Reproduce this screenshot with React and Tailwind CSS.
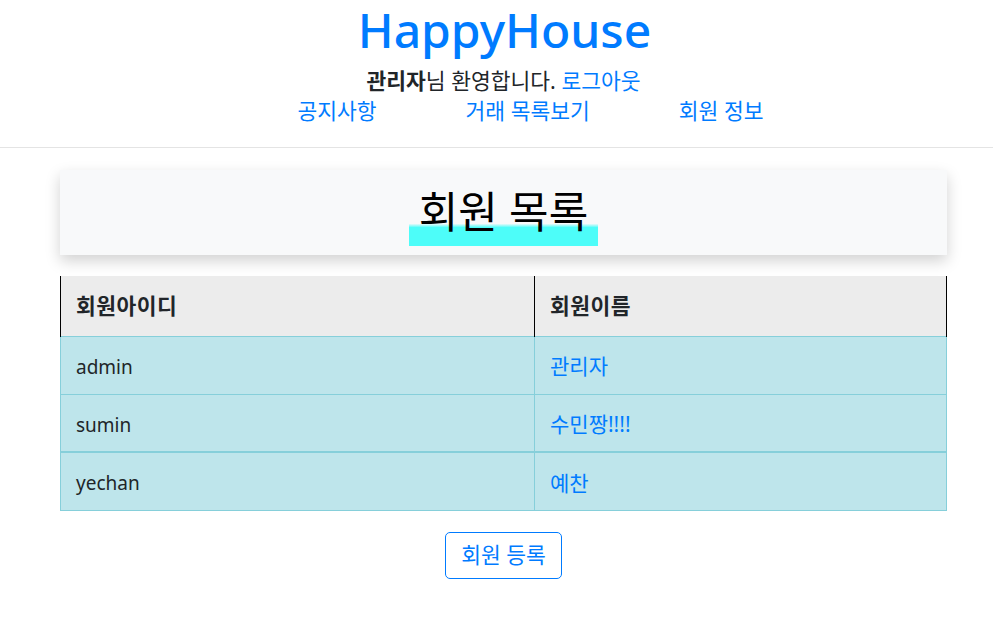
import React from "react";

const members = [
  { id: "admin", name: "관리자" },
  { id: "sumin", name: "수민짱!!!!" },
  { id: "yechan", name: "예찬" },
];

export default function App() {
  return (
    <div
      className="min-h-screen bg-white text-[#212529]"
      style={{ fontFamily: '"Noto Sans", "Noto Sans CJK KR", sans-serif' }}
    >
      <header className="text-center">
        <h1 className="pl-[16px] text-[48px] leading-[60px] font-medium text-[#007bff]">HappyHouse</h1>
        <div className="mt-[6px] pl-[14px] text-[21.5px] leading-[30px]">
          <b>관리자</b>님 환영합니다. <a className="text-[#007bff]">로그아웃</a>
        </div>
        <nav className="flex justify-center gap-[89px] pl-[68px] text-[21.5px] leading-[30px] text-[#007bff]">
          <a>공지사항</a>
          <a>거래 목록보기</a>
          <a>회원 정보</a>
        </nav>
      </header>
      <div className="mt-[21px] border-t border-[#e4e4e4]" />

      <main className="ml-[60px] w-[887px] pt-[22px]">
        <div className="h-[85px] bg-[#f8f9fa] shadow-[0_6px_14px_rgba(0,0,0,0.18)] flex items-start justify-center pt-[20px]">
          <h2 className="inline-block h-[56px] text-[43px] leading-[44px] text-black px-[10px] bg-[linear-gradient(to_bottom,transparent_60%,#4dfdf9_67%)]">
            회원 목록
          </h2>
        </div>

        <table className="mt-[21px] w-full border-collapse text-[19px]">
          <thead>
            <tr className="bg-[#ececec] h-[60px]">
              <th className="w-[474px] border-l border-r border-black text-left font-bold text-[21.5px] tracking-[0.5px] px-[15px]">회원아이디</th>
              <th className="border-r border-black text-left font-bold text-[21.5px] tracking-[0.5px] px-[15px]">회원이름</th>
            </tr>
          </thead>
          <tbody className="bg-[#bee5eb]">
            {members.map((m, i) => (
              <tr
                key={m.id}
                className={
                  "h-[58px] border-[#86cfda] " +
                  (i === 2 ? "border-t-2" : "border-t")
                }
              >
                <td className="border-l border-r border-b border-[#86cfda] px-[15px] pt-[4px]">{m.id}</td>
                <td className="border-r border-b border-[#86cfda] px-[15px] pt-[4px] text-[21px] text-[#007bff]">{m.name}</td>
              </tr>
            ))}
          </tbody>
        </table>

        <div className="mt-[21px] flex justify-center">
          <button className="h-[47px] w-[117px] rounded-[5px] border border-solid border-[#007bff] text-[21.5px] text-[#007bff]">
            회원 등록
          </button>
        </div>
      </main>
    </div>
  );
}
